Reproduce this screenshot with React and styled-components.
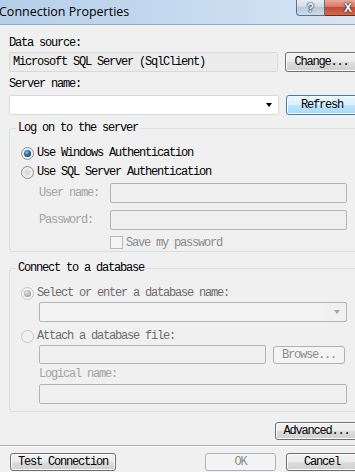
import React from "react";
import styled, { createGlobalStyle, css } from "styled-components";

const GlobalStyle = createGlobalStyle`
  html, body {
    margin: 0;
    padding: 0;
    background: #f0f0f0;
  }
`;

const Window = styled.div`
  width: 355px;
  height: 472px;
  overflow: hidden;
  background: #f0f0f0;
  font-family: "Liberation Mono", monospace;
  font-size: 12px;
  letter-spacing: -1.2px;
  color: #000;
`;

const TitleBar = styled.div`
  height: 24px;
  display: flex;
  align-items: flex-start;
  border-bottom: 1px solid #93a9c2;
  background: linear-gradient(90deg, #b6cfe9 0%, #c3d8ee 45%, #d6e5f5 100%);
`;

const Title = styled.div`
  flex: 1;
  margin-left: -1px;
  font-family: "Open Sans", "Noto Sans", sans-serif;
  font-size: 12.5px;
  letter-spacing: 0;
  line-height: 23px;
  color: #000;
`;

const CaptionButtons = styled.div`
  display: flex;
  margin-right: -17px;
`;

const CaptionButton = styled.div`
  box-sizing: border-box;
  height: 16px;
  width: ${(p) => p.$w}px;
  display: flex;
  align-items: center;
  justify-content: center;
  font-family: "Liberation Sans", sans-serif;
  font-weight: bold;
  font-size: 12px;
  letter-spacing: 0;
  color: #fff;
  text-shadow: 0 0 1px #1c2a3c, 0 0 1px #1c2a3c, 0 0 2px #1c2a3c;
  border: 1px solid #5e6f86;
  border-top: none;
  ${(p) =>
    p.$close
      ? css`
          border-color: #6d2a1f;
          border-radius: 0 0 4px 0;
          border-left: none;
          background: linear-gradient(#e9a99b 0%, #d7786a 45%, #c44a34 50%, #d06a4c 100%);
        `
      : css`
          border-radius: 0 0 0 4px;
          background: linear-gradient(#e6edf5 0%, #cfdbe8 45%, #b9c9db 50%, #cddbea 100%);
        `}
`;

const Body = styled.div`
  width: 349px;
  padding-left: 9px;
`;

const Label = styled.div`
  height: 12px;
  line-height: 12px;
  white-space: nowrap;
  margin-top: ${(p) => p.$top || 0}px;
  color: ${(p) => (p.$dim ? "#a3a3a3" : p.$gray ? "#6d6d6d" : "#000")};
`;

const Row = styled.div`
  display: flex;
  align-items: center;
  gap: 7px;
  margin-top: ${(p) => p.$top || 0}px;
`;

const TextBox = styled.div`
  box-sizing: border-box;
  width: ${(p) => p.$w}px;
  height: ${(p) => p.$h || 20}px;
  line-height: 18px;
  padding-left: 3px;
  border-radius: 2px;
  border: 1px solid ${(p) => (p.$disabled ? "#b4b4b4" : "#d9d9d9")};
  background: ${(p) => (p.$disabled ? "#f0f0f0" : p.$readonly ? "#ececec" : "#fff")};
  white-space: nowrap;
  overflow: hidden;
`;

const Combo = styled(TextBox)`
  display: flex;
  align-items: center;
  justify-content: flex-end;
  padding: 0;
  margin-top: ${(p) => p.$top || 0}px;
  background: ${(p) =>
    p.$disabled
      ? "linear-gradient(90deg, #f3f3f3 0%, #f3f3f3 92%, #f0f0f0 92%)"
      : "#fff"};
`;

const Arrow = styled.span`
  width: 0;
  height: 0;
  margin-right: ${(p) => p.$right}px;
  border-left: 3.5px solid transparent;
  border-right: 3.5px solid transparent;
  border-top: 4px solid ${(p) => (p.$disabled ? "#a6a6a6" : "#000")};
`;

const Button = styled.button`
  box-sizing: border-box;
  flex: none;
  width: ${(p) => p.$w}px;
  height: ${(p) => p.$h || 19}px;
  padding: 0;
  font-family: "Liberation Mono", monospace;
  font-size: 12px;
  letter-spacing: -1.2px;
  color: #000;
  border: 1px solid #707070;
  border-radius: 3px;
  background: linear-gradient(#f2f2f2 0%, #ebebeb 49%, #dddddd 50%, #cfcfcf 100%);
  box-shadow: inset 0 0 0 1px #fbfbfb;
  ${(p) =>
    p.$default &&
    css`
      border-color: #3c7fb1;
      background: linear-gradient(#eaf6fd 0%, #d9f0fc 49%, #bee6fd 50%, #a7d9f5 100%);
    `}
  &:disabled {
    color: #8b8b8b;
    border-color: #adb2b5;
    background: #f4f4f4;
    box-shadow: none;
  }
`;

const Group = styled.fieldset`
  margin: ${(p) => p.$top}px 0 0;
  padding: 11px 10px ${(p) => p.$bottom}px 11px;
  border: 1px solid #d5dfe5;
  border-radius: 3px;
  min-width: 0;
`;

const Legend = styled.legend`
  padding: 0 2px;
  margin-left: -5px;
  line-height: 12px;
`;

const RadioRow = styled.div`
  display: flex;
  align-items: center;
  gap: 3px;
  height: 16px;
  margin-top: ${(p) => p.$top || 0}px;
  color: ${(p) => (p.$disabled ? "#6d6d6d" : "#000")};
`;

const RadioMark = styled.span`
  box-sizing: border-box;
  flex: none;
  width: 13px;
  height: 13px;
  border-radius: 50%;
  display: flex;
  align-items: center;
  justify-content: center;
  border: 1px solid ${(p) => (p.$disabled ? "#c6c6c6" : "#8e8f8f")};
  background: ${(p) =>
    p.$disabled
      ? "radial-gradient(circle at 50% 50%, #ececec 0%, #f6f6f6 100%)"
      : "radial-gradient(circle at 50% 50%, #d4d4d4 0%, #ececec 55%, #fafafa 100%)"};
  &::after {
    content: "";
    display: ${(p) => (p.$checked ? "block" : "none")};
    width: 7px;
    height: 7px;
    border-radius: 50%;
    background: ${(p) =>
      p.$disabled
        ? "radial-gradient(circle at 40% 35%, #e6e6e6 0%, #a8a8a8 65%, #8d8d8d 100%)"
        : "radial-gradient(circle at 40% 35%, #7cc6e8 0%, #1f6aa3 45%, #0a3560 100%)"};
  }
`;

const Credentials = styled.div`
  display: grid;
  grid-template-columns: 71px 237px;
  row-gap: 7px;
  align-items: center;
  padding-left: 18px;
  margin-top: 3px;
`;

const CheckRow = styled.div`
  display: flex;
  align-items: center;
  gap: 3px;
  height: 13px;
  margin: 6px 0 0 89px;
  color: #8a8a8a;
`;

const CheckMark = styled.span`
  box-sizing: border-box;
  width: 13px;
  height: 13px;
  border: 1px solid #b9b9b9;
  background: #f5f5f5;
`;

const Indent = styled.div`
  padding-left: 18px;
`;

const ActionRow = styled.div`
  display: flex;
  justify-content: flex-end;
  margin-top: 10px;
`;

const Separator = styled.div`
  margin-top: 5px;
  height: 0;
  border-top: 1px solid #b2b2b2;
  border-bottom: 1px solid #ffffff;
`;

const Footer = styled.div`
  width: 348px;
  padding-left: 10px;
  margin-top: 6px;
  display: flex;
  justify-content: space-between;
`;

const ButtonGroup = styled.div`
  display: flex;
  gap: 10px;
`;

function Radio({ checked, disabled, children, top }) {
  return (
    <RadioRow $top={top} $disabled={disabled}>
      <RadioMark $checked={checked} $disabled={disabled} />
      {children}
    </RadioRow>
  );
}

export default function App() {
  return (
    <Window>
      <GlobalStyle />
      <TitleBar>
        <Title>Connection Properties</Title>
        <CaptionButtons>
          <CaptionButton $w={29}>?</CaptionButton>
          <CaptionButton $w={47} $close>
            X
          </CaptionButton>
        </CaptionButtons>
      </TitleBar>

      <Body>
        <Label $top={12}>Data source:</Label>
        <Row $top={3}>
          <TextBox $w={269} $readonly>
            Microsoft SQL Server (SqlClient)
          </TextBox>
          <Button $w={73} $h={20}>Change...</Button>
        </Row>

        <Label $top={6}>Server name:</Label>
        <Row $top={5}>
          <Combo $w={270}>
            <Arrow $right={6} />
          </Combo>
          <Button $w={72} $h={20} $default>
            Refresh
          </Button>
        </Row>

        <Group $top={7} $bottom={2}>
          <Legend>Log on to the server</Legend>
          <Radio checked>Use Windows Authentication</Radio>
          <Radio top={3}>Use SQL Server Authentication</Radio>
          <Credentials>
            <Label $dim>User name:</Label>
            <TextBox $w={237} $disabled />
            <Label $dim>Password:</Label>
            <TextBox $w={237} $disabled />
          </Credentials>
          <CheckRow>
            <CheckMark />
            Save my password
          </CheckRow>
        </Group>

        <Group $top={10} $bottom={7}>
          <Legend>Connect to a database</Legend>
          <Radio checked disabled>
            Select or enter a database name:
          </Radio>
          <Indent>
            <Combo $w={308} $disabled $top={1}>
              <Arrow $right={6} $disabled />
            </Combo>
          </Indent>
          <Radio disabled top={6}>
            Attach a database file:
          </Radio>
          <Indent>
            <Row $top={1}>
              <TextBox $w={227} $h={19} $disabled />
              <Button $w={72} $h={18} disabled>
                Browse...
              </Button>
            </Row>
            <Label $top={4} $dim>
              Logical name:
            </Label>
            <Row $top={4}>
              <TextBox $w={308} $disabled />
            </Row>
          </Indent>
        </Group>

        <ActionRow>
          <Button $w={83} $h={18}>Advanced...</Button>
        </ActionRow>
      </Body>

      <Separator />
      <Footer>
        <Button $w={106} $h={18}>Test Connection</Button>
        <ButtonGroup>
          <Button $w={71} $h={18} disabled>
            OK
          </Button>
          <Button $w={72} $h={18}>Cancel</Button>
        </ButtonGroup>
      </Footer>
    </Window>
  );
}
